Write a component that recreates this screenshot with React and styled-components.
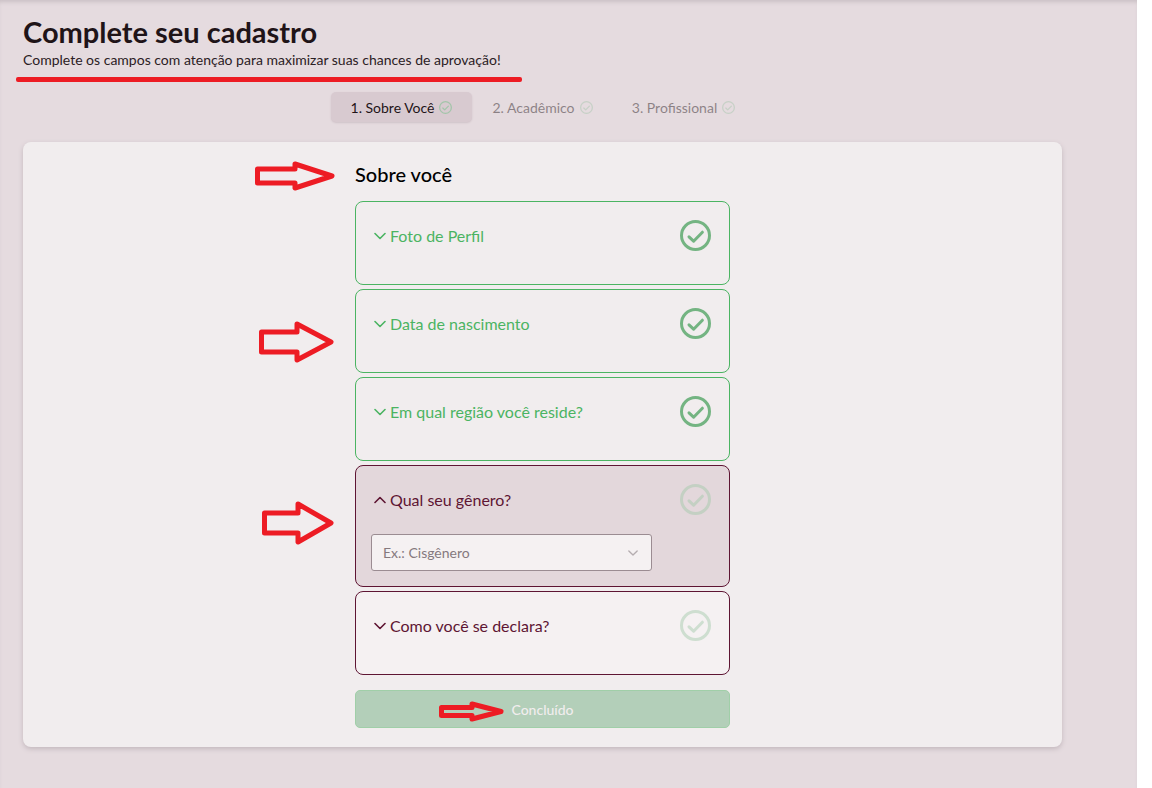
import React, { useState } from "react";
import styled, { createGlobalStyle } from "styled-components";

const questions = [
   { id: "foto", title: "Foto de Perfil", done: true },
   { id: "nascimento", title: "Data de nascimento", done: true },
   { id: "regiao", title: "Em qual região você reside?", done: true },
   { id: "genero", title: "Qual seu gênero?", done: false, placeholder: "Ex.: Cisgênero", options: ["Cisgênero", "Transgênero", "Não binário"] },
   { id: "declara", title: "Como você se declara?", done: false },
];

const tabs = ["1. Sobre Você", "2. Acadêmico", "3. Profissional"];

const CheckIcon = () => (
   <svg viewBox="0 0 31 31" width="100%" height="100%" fill="none" stroke="currentColor" strokeWidth="3" strokeLinecap="round" strokeLinejoin="round" aria-hidden="true">
      <circle cx="15.5" cy="15.5" r="14" />
      <path d="M9 16.8l4.6 4.4 8.8-9" />
   </svg>
);

const Chevron = ({ up }) => (
   <svg viewBox="0 0 12 8" width="12" height="8" fill="none" stroke="currentColor" strokeWidth="1.6" strokeLinecap="round" strokeLinejoin="round" aria-hidden="true">
      <path d={up ? "M1 6.5l5-5 5 5" : "M1 1.5l5 5 5-5"} />
   </svg>
);

// hand drawn arrow, the head takes half of the length
const Arrow = ({ left, top, width, height, neck }) => {
   const mid = height / 2;
   const head = Math.round(width / 2);
   return (
      <Mark $left={left} $top={top} width={width} height={height} viewBox={`0 0 ${width} ${height}`} aria-hidden="true">
         <path d={`M2.5 ${mid - neck}H${head}V3L${width - 3} ${mid}L${head} ${height - 3}V${mid + neck}H2.5Z`} />
      </Mark>
   );
};

const Question = ({ item, open, onToggle }) => (
   <Card $done={item.done} $open={open}>
      <CardTop>
         <CardButton type="button" aria-expanded={open} onClick={() => onToggle(item.id)}>
            <Chevron up={open} />
            <span>{item.title}</span>
         </CardButton>
         <CardCheck $done={item.done}><CheckIcon /></CardCheck>
      </CardTop>
      {open && item.options &&
         <SelectBox>
            <Select aria-label={item.title} defaultValue="">
               <option value="" disabled>{item.placeholder}</option>
               {item.options.map((o) => <option key={o}>{o}</option>)}
            </Select>
            <SelectArrow><Chevron /></SelectArrow>
         </SelectBox>}
   </Card>
);

const App = () => {
   const [current, setCurrent] = useState(0);
   const [opened, setOpened] = useState("genero");
   const onToggle = (id) => setOpened(opened === id ? null : id);
   return (
      <Page>
         <GlobalStyle />
         <Header>
            <Title>Complete seu cadastro</Title>
            <Subtitle>Complete os campos com atenção para maximizar suas chances de aprovação!</Subtitle>
            <Underline />
         </Header>
         <Tabs>
            {tabs.map((t, i) => (
               <Tab key={t} type="button" $active={i === current} onClick={() => setCurrent(i)}>
                  {t}
                  <TabCheck><CheckIcon /></TabCheck>
               </Tab>
            ))}
         </Tabs>
         <Panel>
            <Column>
               <Heading>Sobre você</Heading>
               <List>
                  {questions.map((q) => <Question key={q.id} item={q} open={opened === q.id} onToggle={onToggle} />)}
               </List>
               <Submit type="button">Concluído</Submit>
               <Arrow left={-100} top={-1} width={80} height={30} neck={7} />
               <Arrow left={-96} top={159} width={75} height={42} neck={10} />
               <Arrow left={-93} top={339} width={72} height={44} neck={10} />
               <Arrow left={84} top={539} width={65} height={21} neck={4} />
            </Column>
         </Panel>
      </Page>
   )
};

export default App;

const GlobalStyle = createGlobalStyle`
   * {
      box-sizing: border-box;
   }
   body {
      margin: 0;
      background-color: #fff;
      font-family: Lato, sans-serif;
   }
   button, select {
      font-family: inherit;
   }
`;

const Page = styled.main`
   min-height: 100vh;
   margin-right: 15px;
   padding: 16px 75px 40px 23px;
   background-color: #e5dbdf;
   box-shadow: inset 0 4px 4px -2px #c9bfc4;
`;

const Header = styled.header`
   width: fit-content;
`;

const Title = styled.h1`
   margin: 0;
   font-size: 29px;
   line-height: 32px;
   font-weight: 700;
   color: #1f1418;
`;

const Subtitle = styled.p`
   margin: 0;
   font-size: 14px;
   line-height: 24px;
   color: #2b2024;
`;

const Underline = styled.div`
   height: 5px;
   margin: 5px -21px 0 -7px;
   border-radius: 2px;
   background-color: #ed1c24;
`;

const Tabs = styled.nav`
   display: flex;
   justify-content: center;
   margin: 10px 0 20px;
`;

const Tab = styled.button`
   display: flex;
   align-items: center;
   justify-content: center;
   gap: 5px;
   width: 141px;
   height: 30px;
   padding: 0;
   border: none;
   border-radius: 5px;
   font-size: 14px;
   color: #1f1418;
   background-color: ${(props) => (props.$active ? '#d8cad0' : 'transparent')};
   box-shadow: ${(props) => (props.$active ? '0 1px 2px #cfc2c8' : 'none')};
   opacity: ${(props) => (props.$active ? 1 : 0.45)};
`;

const TabCheck = styled.span`
   width: 13px;
   height: 13px;
   color: #a3c5aa;
   svg {
      display: block;
   }
`;

const Panel = styled.section`
   padding: 20px 16px 19px;
   border-radius: 8px;
   background-color: #f1edee;
   box-shadow: 0 2px 5px #c3b8bd;
`;

const Column = styled.div`
   position: relative;
   max-width: 375px;
   margin: 0 auto;
`;

const Heading = styled.h2`
   margin: 0 0 14px;
   font-size: 20px;
   line-height: 25px;
   font-weight: 500;
   color: #000;
`;

const List = styled.div`
   display: grid;
   gap: 4px;
`;

const Card = styled.article`
   min-height: 84px;
   padding: 15px;
   border: 1px solid ${(props) => (props.$done ? '#4bb462' : '#5e1533')};
   border-radius: 8px;
   color: ${(props) => (props.$done ? '#4bb462' : '#5e1533')};
   background-color: ${(props) => (props.$open ? '#e3d7db' : props.$done ? '#f1edee' : '#f5f1f2')};
`;

const CardTop = styled.div`
   display: flex;
   align-items: center;
   justify-content: space-between;
   height: 37px;
   padding: 0 3px;
`;

const CardButton = styled.button`
   display: flex;
   align-items: center;
   gap: 4px;
   padding: 0;
   border: none;
   font-size: 16px;
   color: inherit;
   background: none;
`;

const CardCheck = styled.span`
   width: 31px;
   height: 31px;
   color: ${(props) => (props.$done ? '#74b482' : '#9fc8a8')};
   opacity: ${(props) => (props.$done ? 1 : 0.45)};
   svg {
      display: block;
   }
`;

// select and its arrow share one grid cell
const SelectBox = styled.div`
   display: grid;
   align-items: center;
   width: 281px;
   max-width: 100%;
   margin-top: 16px;
   > * {
      grid-area: 1 / 1;
   }
`;

const Select = styled.select`
   appearance: none;
   width: 100%;
   height: 37px;
   padding: 0 36px 0 11px;
   border: 1px solid #9b8c92;
   border-radius: 3px;
   font-size: 14px;
   color: #85797e;
   background-color: #f5f1f2;
`;

const SelectArrow = styled.span`
   justify-self: end;
   margin-right: 14px;
   line-height: 0;
   color: #b5adb0;
   pointer-events: none;
   svg {
      width: 10px;
   }
`;

const Submit = styled.button`
   display: block;
   width: 100%;
   height: 38px;
   margin-top: 15px;
   border: 1px solid #a0cfa8;
   border-radius: 5px;
   font-size: 14px;
   font-weight: 500;
   color: #f1edee;
   background-color: #b3cfb9;
`;

const Mark = styled.svg`
   position: absolute;
   left: ${(props) => props.$left}px;
   top: ${(props) => props.$top}px;
   overflow: visible;
   fill: none;
   stroke: #ed1c24;
   stroke-width: 5px;
   stroke-linejoin: round;
   pointer-events: none;
`;
